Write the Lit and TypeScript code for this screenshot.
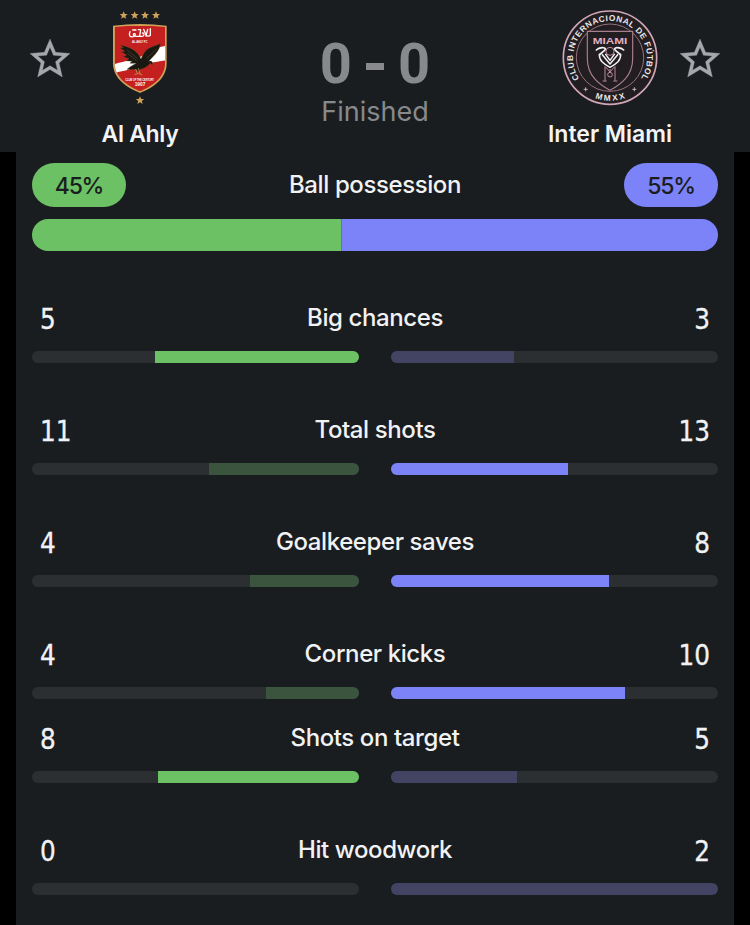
import { html, css, svg, LitElement, nothing } from 'lit';
import { customElement, property } from 'lit/decorators.js';
import { classMap } from 'lit/directives/class-map.js';
import { map } from 'lit/directives/map.js';

interface Stat {
  label: string;
  home: number;
  away: number;
  // no gap between this row and the one above
  tight?: boolean;
}

const STATS: Stat[] = [
  { label: 'Big chances', home: 5, away: 3 },
  { label: 'Total shots', home: 11, away: 13 },
  { label: 'Goalkeeper saves', home: 4, away: 8 },
  { label: 'Corner kicks', home: 4, away: 10 },
  { label: 'Shots on target', home: 8, away: 5, tight: true },
  { label: 'Hit woodwork', home: 0, away: 2 },
];

const STAR_POINTS = '0,-12 3.4,-4 12,-3.8 5.2,1.8 7.6,10.2 0,5.4 -7.6,10.2 -5.2,1.8 -12,-3.8 -3.4,-4';

/** Outlined star used to follow a team */
@customElement('favorite-star')
export class FavoriteStar extends LitElement {
  static styles = css`
    :host {
      display: block;
      width: 40px;
      height: 48px;
    }

    svg {
      display: block;
      fill: #a4a7ac;
      stroke: #a4a7ac;
      stroke-width: 0.15;
    }
  `;

  render() {
    return html`
      <svg width="40" height="48" viewBox="2 0 20 24">
        <path d="M22 9.24l-7.19-.62L12 2 9.19 8.63 2 9.24l5.46 4.73L5.82 21 12 17.27 18.18 21l-1.63-7.03L22 9.24zM12 15.4l-3.76 2.27 1-4.28-3.32-2.88 4.38-.38L12 6.1l1.71 4.04 4.38.38-3.32 2.88 1 4.28L12 15.4z" />
      </svg>
    `;
  }
}

@customElement('ahly-crest')
export class AhlyCrest extends LitElement {
  static styles = css`
    :host {
      display: block;
    }

    svg {
      display: block;
    }

    .gold {
      fill: #cfa45a;
    }

    text {
      fill: #fff;
      font-family: 'Liberation Sans', sans-serif;
      font-weight: 700;
      text-anchor: middle;
    }

    .club {
      font-size: 9px;
    }

    .motto {
      font-size: 8px;
    }

    .year {
      font-size: 14px;
    }
  `;

  render() {
    return html`
      <svg width="100" height="110" viewBox="0 0 300 330">
        <defs>
          <clipPath id="shield">
            <path d="M74 81Q150 73 225 81V190C225 232 188 258 150 274C112 258 74 232 74 190Z" />
          </clipPath>
        </defs>
        ${[101, 134, 165, 198].map(
          x => svg`<polygon class="gold" points=${STAR_POINTS} transform="translate(${x} 46)" />`
        )}
        <path class="gold" d="M69 77Q150 67 230 77V190C230 236 190 263 150 279C110 263 69 236 69 190Z" />
        <g clip-path="url(#shield)">
          <rect x="70" y="70" width="160" height="210" fill="#c4201f" />
          <path d="M70 193C112 181 143 179 171 160C190 146 208 140 230 137V181C196 186 170 190 139 202C112 212 92 214 70 220Z" fill="#fff" />
        </g>
        <g fill="none" stroke="#fff" stroke-width="4" stroke-linecap="round" stroke-linejoin="round">
          <path d="M120 95C115 106 120 112 130 110C138 108 137 99 132 101C127 104 132 110 142 109H157C165 108 161 96 157 99" />
          <path d="M181 86V106C177 110 170 108 168 105L161 88M173 88L168 108M152 90L149 107M128 90H138M145 89H151" />
        </g>
        <text class="club" x="149" y="128" textLength="46" lengthAdjust="spacingAndGlyphs">AL AHLY FC</text>
        <g fill="#191812" stroke="#6d5128" stroke-width="1.2" stroke-linejoin="round">
          <path d="M91 136C104 137 118 142 129 149C143 157 149 169 153 177C160 161 166 150 178 144C188 139 201 137 211 130C210 143 205 152 197 161C190 170 182 176 176 184C184 180 190 186 187 195L181 190C173 200 163 206 151 208L146 215L139 209C130 208 124 210 111 208L121 200C128 196 134 193 139 190L120 190L126 184L108 182L117 176L100 170L110 165L93 155L105 154L90 144L100 143Z" />
          <path d="M110 149L143 176M112 160L140 182M200 147L170 175" fill="none" stroke="#86683a" />
          <path d="M145 205L151 223M137 207L143 222M134 224L145 220L157 225" fill="none" stroke="#b98a46" stroke-width="3" />
        </g>
        <text class="motto" x="149" y="243" textLength="86" lengthAdjust="spacingAndGlyphs">CLUB OF THE CENTURY</text>
        <text class="year" x="150" y="257" textLength="32" lengthAdjust="spacingAndGlyphs">1907</text>
        <polygon class="gold" points=${STAR_POINTS} transform="translate(150 301) scale(1.05)" />
      </svg>
    `;
  }
}

@customElement('miami-crest')
export class MiamiCrest extends LitElement {
  static styles = css`
    :host {
      display: block;
    }

    svg {
      display: block;
    }

    text {
      font-family: 'Liberation Sans', sans-serif;
      font-weight: 700;
    }

    .ring {
      fill: #e9e6e8;
      font-size: 25px;
    }

    .city {
      fill: #e2afc2;
      font-size: 25px;
      text-anchor: middle;
    }
  `;

  render() {
    return html`
      <svg width="110" height="110" viewBox="0 0 330 330">
        <defs>
          <path id="upper" d="M73 236A111 111 0 1 1 257 236" />
          <path id="lower" d="M117 293A129 129 0 0 0 213 293" />
        </defs>
        <circle cx="165" cy="173" r="140" fill="#211d20" stroke="#d1a7b7" stroke-width="5" />
        <circle cx="165" cy="173" r="101" fill="none" stroke="#95717d" stroke-width="3" />
        <text class="ring"><textPath href="#upper" textLength="478">CLUB INTERNACIONAL DE FÚTBOL</textPath></text>
        <text class="ring"><textPath href="#lower" startOffset="3" textLength="93">MMXX</textPath></text>
        <path d="M92 262V274M86 268H98M238 262V274M232 268H244" stroke="#d8ced2" stroke-width="2.5" />
        <path d="M97 94H233V176C233 227 198 253 165 271C132 253 97 227 97 176Z" fill="#211d20" stroke="#a87f8d" stroke-width="3.5" />
        <text class="city" x="165" y="131" textLength="104" lengthAdjust="spacingAndGlyphs">MIAMI</text>
        <g fill="none" stroke="#bd8b9c" stroke-width="3">
          <circle cx="165" cy="154" r="12" />
          <circle cx="165" cy="224" r="7" />
          <path d="M150 199V242M180 199V242M143 243H155M175 243H187M152 201L165 216L178 201M165 207V218" />
        </g>
        <g fill="none" stroke="#f2f0f1" stroke-linecap="round" stroke-linejoin="round">
          <path d="M124 150C132 142 153 140 151 148C149 154 138 158 134 164M206 150C198 142 177 140 179 148C181 154 192 158 196 164" stroke-width="5" />
          <path d="M133 163C132 181 145 191 165 202C185 191 198 181 197 163" stroke-width="4.5" />
          <path d="M142 164L165 192L188 164M152 163L165 181L178 163" stroke-width="4.5" />
        </g>
      </svg>
    `;
  }
}

/** One statistic: both values, its name and the two mirrored bars */
@customElement('stat-row')
export class StatRow extends LitElement {
  static styles = css`
    :host {
      display: block;
      height: 84px;
      padding: 15px 16px 0;
      box-sizing: border-box;
    }

    .values {
      display: grid;
      grid-template-columns: 80px 1fr 80px;
      height: 32px;
      padding: 0 8px;
      line-height: 32px;
      color: #f1f2f3;
    }

    .value {
      font-family: 'DejaVu Sans Condensed', 'DejaVu Sans', sans-serif;
      font-stretch: condensed;
      font-size: 27.5px;
      line-height: 35px;
      -webkit-text-stroke: 0.3px currentColor;
    }

    .value.away {
      text-align: right;
    }

    .label {
      font-size: 24px;
      font-weight: 500;
      letter-spacing: -0.4px;
      text-align: center;
      white-space: nowrap;
    }

    .bars {
      display: grid;
      grid-template-columns: 1fr 1fr;
      gap: 32px;
      margin-top: 17px;
    }

    .track {
      display: flex;
      height: 12px;
      border-radius: 6px;
      overflow: hidden;
      background: #2c2f31;
    }

    .track.home {
      justify-content: flex-end;
    }

    .home .fill {
      background: #3b543d;
    }

    .home .fill.leading {
      background: #6bc163;
    }

    .away .fill {
      background: #434463;
    }

    .away .fill.leading {
      background: #7c83f8;
    }
  `;

  @property({ type: Object })
  stat: Stat | null = null;

  private renderTrack(side: 'home' | 'away', share: number, leading: boolean) {
    return html`
      <div class="track ${side}">
        <div class=${classMap({ fill: true, leading })} style="width: ${share * 100}%"></div>
      </div>
    `;
  }

  render() {
    if (!this.stat) {
      return nothing;
    }

    const { label, home, away } = this.stat;
    const total = home + away;
    // A higher away value only stands out when the home side has one too
    const awayLeads = away > home && home > 0;

    return html`
      <div class="values">
        <span class="value">${home}</span>
        <span class="label">${label}</span>
        <span class="value away">${away}</span>
      </div>
      <div class="bars">
        ${this.renderTrack('home', home / total, home > away)}
        ${this.renderTrack('away', away / total, awayLeads)}
      </div>
    `;
  }
}

@customElement('app-root')
export class AppRoot extends LitElement {
  static styles = css`
    :host {
      display: block;
      height: 925px;
      overflow: hidden;
      background: #000;
      font-family: Inter, 'Liberation Sans', sans-serif;
    }

    .header {
      display: flex;
      height: 152px;
      padding: 0 30px;
      box-sizing: border-box;
      background: #1a1d20;
    }

    favorite-star {
      margin-top: 35px;
    }

    .team {
      display: flex;
      flex-direction: column;
      align-items: center;
      gap: 8px;
      width: 140px;
    }

    .team-name {
      font-size: 23px;
      font-weight: 600;
      line-height: 32px;
      color: #f3f4f5;
      white-space: nowrap;
    }

    .team-name.home {
      letter-spacing: -0.3px;
    }

    .result {
      flex: 1;
      padding-top: 36px;
      text-align: center;
      color: #87898c;
    }

    .score {
      display: flex;
      justify-content: center;
      align-items: center;
      gap: 14px;
      height: 56px;
      font-family: Roboto, sans-serif;
      font-size: 56px;
      font-weight: 700;
      line-height: 56px;
    }

    .dash {
      width: 18px;
      height: 7px;
      margin-top: 5px;
      background: #87898c;
    }

    .status {
      height: 36px;
      font-size: 27px;
      line-height: 39px;
    }

    .panel {
      height: 773px;
      margin: 0 16px;
      background: #1a1d20;
    }

    .possession {
      height: 135px;
      padding: 11px 16px 0;
      box-sizing: border-box;
    }

    .possession-head {
      display: flex;
      justify-content: space-between;
      height: 44px;
      line-height: 44px;
      letter-spacing: -0.4px;
      color: #f1f2f3;
      font-size: 24px;
      font-weight: 500;
    }

    .pill {
      width: 94px;
      border-radius: 22px;
      font-size: 23px;
      letter-spacing: -1.3px;
      line-height: 47px;
      text-align: center;
      color: #1a1d20;
    }

    .pill.home,
    .share.home {
      background: #6bc163;
    }

    .pill.away,
    .share.away {
      background: #7c83f8;
    }

    .shares {
      display: flex;
      height: 32px;
      margin-top: 12px;
      border-radius: 16px;
      overflow: hidden;
    }

    .share.home {
      border-right: 1px solid #5c7e98;
    }

    .share.away {
      flex: 1;
    }

    .stats {
      display: flex;
      flex-direction: column;
    }

    stat-row + stat-row {
      margin-top: 28px;
    }

    stat-row + stat-row.tight {
      margin-top: 0;
    }
  `;

  @property({ type: Number })
  homePossession: number = 45;

  render() {
    return html`
      <div class="header">
        <favorite-star></favorite-star>
        <div class="team">
          <ahly-crest></ahly-crest>
          <span class="team-name home">Al Ahly</span>
        </div>
        <div class="result">
          <div class="score"><span>0</span><span class="dash"></span><span>0</span></div>
          <div class="status">Finished</div>
        </div>
        <div class="team">
          <miami-crest></miami-crest>
          <span class="team-name">Inter Miami</span>
        </div>
        <favorite-star></favorite-star>
      </div>
      <div class="panel">
        <div class="possession">
          <div class="possession-head">
            <span class="pill home">${this.homePossession}%</span>
            <span>Ball possession</span>
            <span class="pill away">${100 - this.homePossession}%</span>
          </div>
          <div class="shares">
            <div class="share home" style="width: ${this.homePossession}%"></div>
            <div class="share away"></div>
          </div>
        </div>
        <div class="stats">
          ${map(STATS, stat => html`
            <stat-row class=${classMap({ tight: !!stat.tight })} .stat=${stat}></stat-row>
          `)}
        </div>
      </div>
    `;
  }
}

declare global {
  interface HTMLElementTagNameMap {
    'favorite-star': FavoriteStar;
    'ahly-crest': AhlyCrest;
    'miami-crest': MiamiCrest;
    'stat-row': StatRow;
    'app-root': AppRoot;
  }
}
